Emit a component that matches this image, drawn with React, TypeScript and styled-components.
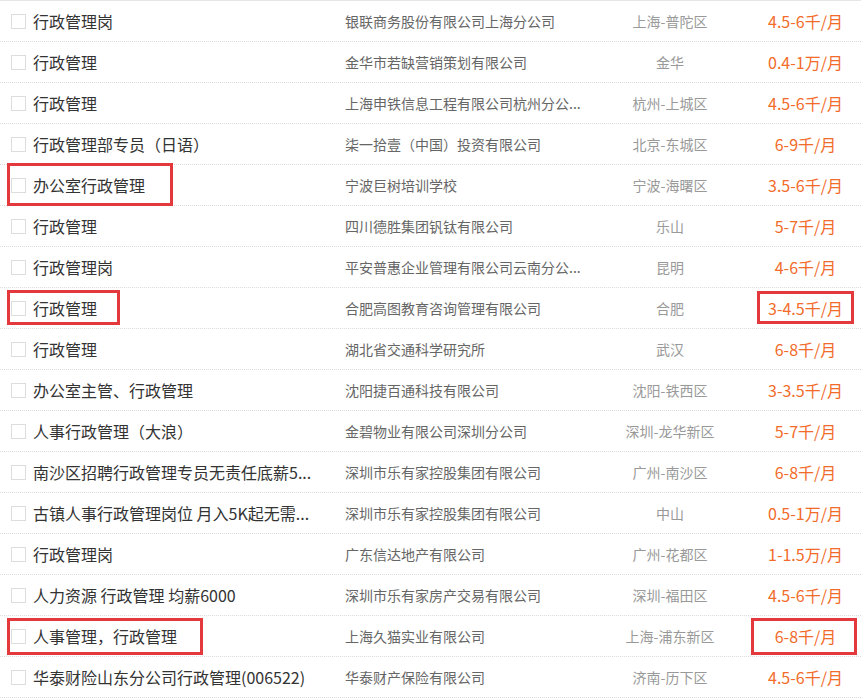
import styled, { createGlobalStyle } from "styled-components";

const GlobalStyle = createGlobalStyle`
  body {
    margin: 0;
    background: #fff;
    font-family: "Noto Sans CJK SC", "Noto Sans", sans-serif;
  }
`;

interface Box {
  left: number;
  top: number;
  width: number;
  height: number;
}

interface Job {
  title: string;
  company: string;
  city: string;
  salary: string;
  titleMark?: Box;
  salaryMark?: Box;
}

const JOBS: Job[] = [
  { title: "行政管理岗", company: "银联商务股份有限公司上海分公司", city: "上海-普陀区", salary: "4.5-6千/月" },
  { title: "行政管理", company: "金华市若缺营销策划有限公司", city: "金华", salary: "0.4-1万/月" },
  { title: "行政管理", company: "上海申铁信息工程有限公司杭州分公...", city: "杭州-上城区", salary: "4.5-6千/月" },
  { title: "行政管理部专员（日语）", company: "柒一拾壹（中国）投资有限公司", city: "北京-东城区", salary: "6-9千/月" },
  {
    title: "办公室行政管理",
    company: "宁波巨树培训学校",
    city: "宁波-海曙区",
    salary: "3.5-6千/月",
    titleMark: { left: 7, top: -2, width: 166, height: 43 },
  },
  { title: "行政管理", company: "四川德胜集团钒钛有限公司", city: "乐山", salary: "5-7千/月" },
  { title: "行政管理岗", company: "平安普惠企业管理有限公司云南分公...", city: "昆明", salary: "4-6千/月" },
  {
    title: "行政管理",
    company: "合肥高图教育咨询管理有限公司",
    city: "合肥",
    salary: "3-4.5千/月",
    titleMark: { left: 7, top: 2, width: 113, height: 35 },
    salaryMark: { left: 757, top: 3, width: 97, height: 33 },
  },
  { title: "行政管理", company: "湖北省交通科学研究所", city: "武汉", salary: "6-8千/月" },
  { title: "办公室主管、行政管理", company: "沈阳捷百通科技有限公司", city: "沈阳-铁西区", salary: "3-3.5千/月" },
  { title: "人事行政管理（大浪）", company: "金碧物业有限公司深圳分公司", city: "深圳-龙华新区", salary: "5-7千/月" },
  { title: "南沙区招聘行政管理专员无责任底薪5...", company: "深圳市乐有家控股集团有限公司", city: "广州-南沙区", salary: "6-8千/月" },
  { title: "古镇人事行政管理岗位 月入5K起无需...", company: "深圳市乐有家控股集团有限公司", city: "中山", salary: "0.5-1万/月" },
  { title: "行政管理岗", company: "广东信达地产有限公司", city: "广州-花都区", salary: "1-1.5万/月" },
  { title: "人力资源 行政管理 均薪6000", company: "深圳市乐有家房产交易有限公司", city: "深圳-福田区", salary: "4.5-6千/月" },
  {
    title: "人事管理，行政管理",
    company: "上海久猫实业有限公司",
    city: "上海-浦东新区",
    salary: "6-8千/月",
    titleMark: { left: 7, top: 2, width: 196, height: 37 },
    salaryMark: { left: 751, top: 2, width: 106, height: 37 },
  },
  { title: "华泰财险山东分公司行政管理(006522)", company: "华泰财产保险有限公司", city: "济南-历下区", salary: "4.5-6千/月" },
];

const List = styled("ul")`
  width: 861px;
  margin: 0;
  padding: 0;
  list-style: none;
  border-top: 1px solid #e6e6e6;
`;

const Row = styled("li")`
  position: relative;
  display: grid;
  grid-template-columns: 33px 312px 245px 160px 111px;
  align-items: center;
  height: 40px;
  border-bottom: 1px dotted #dcdcdc;
`;

const Check = styled("span")`
  display: block;
  width: 13px;
  height: 13px;
  margin-left: 11px;
  border: 1px solid #dddddd;
  background: #fff;
`;

const Title = styled("span")`
  font-size: 16px;
  color: #333;
  white-space: nowrap;
  overflow: hidden;
`;

const Company = styled("span")`
  font-size: 14px;
  color: #666;
  white-space: nowrap;
  overflow: hidden;
`;

const City = styled("span")`
  font-size: 14px;
  color: #999;
  text-align: center;
  white-space: nowrap;
`;

const Salary = styled("span")`
  font-size: 16px;
  color: #f26b2a;
  text-align: center;
  white-space: nowrap;
`;

// red annotation boxes drawn over the screenshot
const Mark = styled("i")<{ $box: Box }>`
  position: absolute;
  left: ${(p) => p.$box.left}px;
  top: ${(p) => p.$box.top}px;
  width: ${(p) => p.$box.width}px;
  height: ${(p) => p.$box.height}px;
  box-sizing: border-box;
  border: 3px solid #e4393c;
  pointer-events: none;
`;

function App() {
  return (
    <>
      <GlobalStyle />
      <List>
        {JOBS.map((job, i) => (
          <Row key={i}>
            <Check />
            <Title>{job.title}</Title>
            <Company>{job.company}</Company>
            <City>{job.city}</City>
            <Salary>{job.salary}</Salary>
            {job.titleMark && <Mark $box={job.titleMark} />}
            {job.salaryMark && <Mark $box={job.salaryMark} />}
          </Row>
        ))}
      </List>
    </>
  );
}

export default App;
